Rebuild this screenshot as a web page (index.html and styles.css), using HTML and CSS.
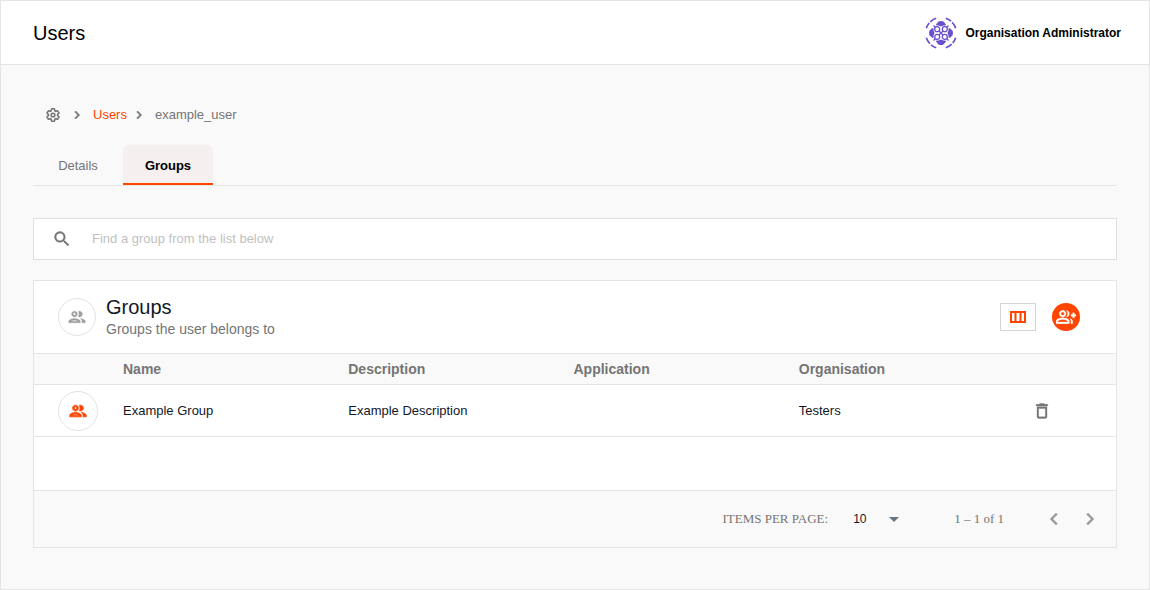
FILE: index.html
```html
<!DOCTYPE html>
<html lang="en">
<head>
<meta charset="utf-8">
<title>Users</title>
<link rel="stylesheet" href="styles.css">
</head>
<body>
<svg class="defs" aria-hidden="true">
  <symbol id="group" viewBox="0 0 24 24"><path d="M9 13.75c-2.34 0-7 1.17-7 3.5V19h14v-1.75c0-2.33-4.66-3.5-7-3.5zM4.34 17c.84-.58 2.87-1.25 4.66-1.25s3.82.67 4.66 1.25H4.34zM9 12c1.93 0 3.5-1.57 3.5-3.5S10.93 5 9 5 5.5 6.57 5.5 8.5 7.07 12 9 12zm0-5c.83 0 1.5.67 1.5 1.5S9.83 10 9 10s-1.5-.67-1.5-1.5S8.17 7 9 7zm7.04 6.81c1.16.84 1.96 1.96 1.96 3.44V19h4v-1.75c0-2.02-3.5-3.17-5.96-3.44zM15 12c1.93 0 3.5-1.57 3.5-3.5S16.93 5 15 5c-.54 0-1.04.13-1.5.35.63.89 1 1.98 1 3.15s-.37 2.26-1 3.15c.46.22.96.35 1.5.35z"/></symbol>
  <symbol id="next" viewBox="0 0 24 24"><path d="M10 6 8.59 7.41 13.17 12l-4.58 4.59L10 18l6-6z"/></symbol>
  <symbol id="prev" viewBox="0 0 24 24"><path d="M15.41 7.41 14 6l-6 6 6 6 1.41-1.41L10.83 12z"/></symbol>
  <symbol id="lens" viewBox="-16 -16 32 32"><path d="M-2.500-11.500Q0-12.500 2.500-11.500L5-8.500 4.500-7.500H2.500L0-6.500-2.500-7.500H-4.500L-5-8.500z"/></symbol>
</svg>
<div class="page">
  <header class="topbar">
    <h1 class="topbar-title">Users</h1>
    <div class="account">
      <svg class="avatar" viewBox="-16 -16 32 32" aria-hidden="true">
        <g fill="none" stroke="#6a4fd0" stroke-width="1.7">
          <path stroke-dasharray="6 1.500 8" d="M-14.700 -4.800A15.400 15.400 0 0 1-4.800 -14.700"/>
          <path stroke-dasharray="6 1.500 8" d="M4.800 -14.700A15.400 15.400 0 0 1 14.700 -4.800"/>
          <path stroke-dasharray="6 1.500 8" d="M14.700 4.800A15.400 15.400 0 0 1 4.800 14.700"/>
          <path stroke-dasharray="6 1.500 8" d="M-4.800 14.700A15.400 15.400 0 0 1-14.700 4.800"/>
        </g>
        <g fill="#6a4fd0">
          <use href="#lens" x="-16" y="-16" width="32" height="32"/>
          <use href="#lens" x="-16" y="-16" width="32" height="32" transform="rotate(90)"/>
          <use href="#lens" x="-16" y="-16" width="32" height="32" transform="rotate(180)"/>
          <use href="#lens" x="-16" y="-16" width="32" height="32" transform="rotate(270)"/>
        </g>
        <path d="M-7.500-7.500-5.500-5.500M7.500-7.500 5.500-5.500M-7.500 7.500-5.500 5.500M7.500 7.500 5.500 5.500M-2-2 2 2M2-2-2 2" stroke="#6a4fd0" stroke-width="1.300"/>
        <g fill="#fff" stroke="#6a4fd0" stroke-width="1.300">
          <circle cx="-3.800" cy="-3.800" r="2.500"/><circle cx="3.800" cy="-3.800" r="2.500"/>
          <circle cx="-3.800" cy="3.800" r="2.500"/><circle cx="3.800" cy="3.800" r="2.500"/>
        </g>
      </svg>
      <span>Organisation Administrator</span>
    </div>
  </header>
  <main class="content">
    <nav class="crumbs" aria-label="Breadcrumb">
      <a class="crumb-home" href="#" aria-label="Settings"><svg class="icon-s" viewBox="0 0 26 26"><g transform="translate(1 1)" fill="none" stroke="currentColor" stroke-width="2.500"><path d="M19.43 12.98c.04-.32.07-.64.07-.98s-.03-.66-.07-.98l2.110-1.650c.19-.15.24-.42.12-.64l-2-3.460c-.12-.22-.39-.3-.61-.22l-2.490 1c-.52-.4-1.080-.73-1.690-.98l-.38-2.650C14.460 2.180 14.250 2 14 2h-4c-.25 0-.46.18-.49.42l-.38 2.650c-.61.25-1.170.59-1.690.98l-2.490-1c-.23-.09-.49 0-.61.22l-2 3.460c-.13.22-.07.49.12.64l2.110 1.650c-.04.32-.07.65-.07.98s.03.66.07.98l-2.110 1.650c-.19.15-.24.42-.12.64l2 3.460c.12.22.39.3.61.22l2.490-1c.52.4 1.080.73 1.690.98l.38 2.650c.03.24.24.42.49.42h4c.25 0 .46-.18.49-.42l.38-2.650c.61-.25 1.170-.59 1.690-.98l2.490 1c.23.09.49 0 .61-.22l2-3.460c.12-.22.07-.49-.12-.64z"/><circle cx="12" cy="12" r="3"/></g></svg></a>
      <svg class="icon-s bold crumb-sep"><use href="#next"/></svg>
      <a class="crumb-link" href="#">Users</a>
      <svg class="icon-s bold crumb-sep-tight"><use href="#next"/></svg>
      <span>example_user</span>
    </nav>
    <div class="tabs" role="tablist">
      <button class="tab" role="tab" aria-selected="false">Details</button>
      <button class="tab tab-active" role="tab" aria-selected="true">Groups</button>
    </div>
    <div class="search">
      <svg class="icon-m semi" viewBox="0 0 24 24" aria-hidden="true"><path d="M15.500 14h-.79l-.28-.27C15.410 12.590 16 11.110 16 9.500 16 5.910 13.090 3 9.500 3S3 5.910 3 9.500 5.910 16 9.500 16c1.610 0 3.090-.59 4.230-1.570l.27.28v.79l5 4.990L20.490 19zm-6 0C7.010 14 5 11.990 5 9.500S7.010 5 9.500 5 14 7.010 14 9.500 11.990 14 9.500 14z"/></svg>
      <input class="search-input" type="text" aria-label="Find a group" placeholder="Find a group from the list below">
    </div>
    <section class="card">
      <header class="card-head">
        <span class="badge"><svg class="icon-m semi"><use href="#group"/></svg></span>
        <div class="card-text">
          <h2 class="card-title">Groups</h2>
          <p class="card-sub">Groups the user belongs to</p>
        </div>
        <button class="columns-btn" aria-label="Choose columns"><svg class="columns-icon" viewBox="0 0 16 12"><path fill-rule="evenodd" d="M0 0h16v12H0zM2 2v8h2.500V2zM6.500 2v8h3V2zM11.500 2v8H14V2z"/></svg></button>
        <button class="add-btn" aria-label="Add to group"><svg class="icon-m semi" viewBox="0 0 24 24"><path d="M22 9V7h-2v2h-2v2h2v2h2v-2h2V9zM8 12c2.210 0 4-1.790 4-4s-1.790-4-4-4-4 1.790-4 4 1.790 4 4 4zm0-6c1.100 0 2 .9 2 2s-.9 2-2 2-2-.9-2-2 .9-2 2-2zm0 7c-2.670 0-8 1.340-8 4v3h16v-3c0-2.660-5.330-4-8-4zm6 5H2v-.99C2.200 16.290 5.300 15 8 15s5.800 1.290 6 2zM12.510 4.050C13.430 5.110 14 6.490 14 8s-.57 2.890-1.490 3.950C14.470 11.700 16 10.040 16 8s-1.530-3.700-3.490-3.950zm4.020 9.780C17.420 14.660 18 15.700 18 17v3h2v-3c0-1.450-1.590-2.510-3.470-3.170z"/></svg></button>
      </header>
      <table class="table">
        <colgroup><col class="col-icon"><col><col><col><col><col class="col-actions"></colgroup>
        <thead>
          <tr><th></th><th>Name</th><th>Description</th><th>Application</th><th>Organisation</th><th></th></tr>
        </thead>
        <tbody>
          <tr>
            <td class="cell-icon"><span class="badge badge-row"><svg class="icon-m bold"><use href="#group"/></svg></span></td>
            <td>Example Group</td><td>Example Description</td><td></td><td>Testers</td>
            <td><button class="icon-btn delete" aria-label="Remove"><svg class="icon-m semi" viewBox="0 0 24 24"><path d="M6 19c0 1.100.9 2 2 2h8c1.100 0 2-.9 2-2V7H6zM8 9h8v10H8zm7.500-5-1-1h-5l-1 1H5v2h14V4z"/></svg></button></td>
          </tr>
        </tbody>
      </table>
      <footer class="pager">
        <label class="pager-label" for="size">ITEMS PER PAGE:</label>
        <span class="select-wrap">
          <select class="pager-select" id="size"><option>10</option><option>25</option></select>
          <svg class="caret" viewBox="0 0 10 5" aria-hidden="true"><path d="M0 0h10L5 5z"/></svg>
        </span>
        <span class="pager-range">1 – 1 of 1</span>
        <button class="icon-btn" aria-label="Previous page"><svg class="icon-l semi"><use href="#prev"/></svg></button>
        <button class="icon-btn pager-next" aria-label="Next page"><svg class="icon-l semi"><use href="#next"/></svg></button>
      </footer>
    </section>
  </main>
</div>
</body>
</html>
```
FILE: styles.css
```css
* { box-sizing: border-box; }
body { margin: 0; font-family: "Liberation Sans", Arial, sans-serif; font-size: 13px; line-height: 16px; color: #111827; }
h1, h2, p { margin: 0; font-weight: 400; }
button { margin: 0; padding: 0; border: 0; background: none; font: inherit; color: inherit; cursor: pointer; }
svg { display: block; flex: none; fill: currentColor; }
a { color: inherit; text-decoration: none; }
.defs { display: none; }
.icon-s { width: 16px; height: 16px; }
.icon-m { width: 20px; height: 20px; }
.icon-l { width: 24px; height: 24px; }
.semi { stroke: currentColor; stroke-width: 0.4; }
.bold { stroke: currentColor; stroke-width: 0.9; }

.page { min-height: 100vh; border: 1px solid #e5e5e8; background: #f9f9f9; }
.topbar { display: flex; align-items: center; justify-content: space-between; height: 64px; padding: 0 28px 0 32px; border-bottom: 1px solid #e5e5e8; background: #fff; }
.topbar-title { font-size: 20px; line-height: 24px; color: #000; }
.account { display: flex; align-items: center; gap: 8px; font-size: 12px; font-weight: 700; color: #000; }
.avatar { width: 32px; height: 32px; }

.content { padding: 40px 32px; }
.crumbs { display: flex; align-items: center; height: 20px; padding-left: 12px; color: #757575; }
.crumb-sep { margin: 0 8px; }
.crumb-sep-tight { margin: 0 8px 0 4px; }
.crumb-link { color: #ff4500; }

.tabs { display: flex; margin-top: 20px; border-bottom: 1px solid #e5e5e5; }
.tab { width: 90px; height: 40px; padding-top: 4px; color: #757575; border-bottom: 2px solid transparent; }
.tab-active { border-color: #ff4500; border-radius: 6px 6px 0 0; background: #f5efef; color: #000; font-weight: 700; }

.search { display: flex; align-items: center; gap: 20px; height: 42px; margin-top: 32px; padding: 0 18px; border: 1px solid #dfdfdf; background: #fff; color: #757575; }
.search-input { flex: 1; min-width: 0; padding: 0; border: 0; outline: 0; background: none; font: inherit; }
.search-input::placeholder { color: #bfbfbf; opacity: 1; }

.card { margin-top: 20px; border: 1px solid #e5e5e5; background: #fff; }
.card-head { display: flex; align-items: center; height: 72px; padding: 0 36px 0 24px; }
.badge { display: flex; align-items: center; justify-content: center; width: 38px; height: 38px; border: 1px solid #e2e2e2; border-radius: 50%; background: #fff; color: #9e9e9e; }
.badge-row { width: 40px; height: 40px; color: #ff4500; }
.card-text { flex: 1; padding-left: 10px; }
.card-title { font-size: 20px; line-height: 24px; }
.card-sub { font-size: 14px; line-height: 20px; color: #757575; }
.columns-btn { display: flex; align-items: center; justify-content: center; width: 36px; height: 28px; border: 1px solid #d5d5d8; color: #ff4500; }
.columns-icon { width: 16px; height: 12px; }
.add-btn { display: flex; align-items: center; justify-content: center; width: 28px; height: 28px; margin-left: 16px; border-radius: 50%; background: #ff4500; color: #fff; }

.table { width: 100%; table-layout: fixed; border-collapse: separate; border-spacing: 0; }
.col-icon { width: 89px; }
.col-actions { width: 92px; }
.table th { height: 32px; padding: 0; border: solid #e5e5e5; border-width: 1px 0; background: #f9f9f9; text-align: left; font-size: 14px; font-weight: 700; color: #757575; }
.table td { height: 52px; padding: 0; border-bottom: 1px solid #e5e5e5; }
.table .cell-icon { padding-left: 24px; }
.icon-btn { display: flex; align-items: center; justify-content: center; color: #757575; }
.delete { margin-left: 8px; }

.pager { display: flex; align-items: center; justify-content: flex-end; height: 57px; margin-top: 53px; padding-right: 14px; border-top: 1px solid #e5e5e5; background: #f9f9f9; color: #757575; }
.pager-label, .pager-range { font-family: "Liberation Serif", "Times New Roman", serif; }
.select-wrap { display: grid; align-items: center; width: 46px; margin: 0 55px 0 25px; }
.pager-select { grid-area: 1 / 1; width: 100%; height: 24px; padding: 0; border: 0; appearance: none; background: none; font: inherit; font-size: 12px; color: #111827; }
.caret { grid-area: 1 / 1; justify-self: end; width: 10px; height: 5px; pointer-events: none; color: #6b7280; }
.pager-range { margin-right: 38px; }
.pager-next { margin-left: 12px; }
.pager .icon-btn { color: #9a9a9a; }
```
